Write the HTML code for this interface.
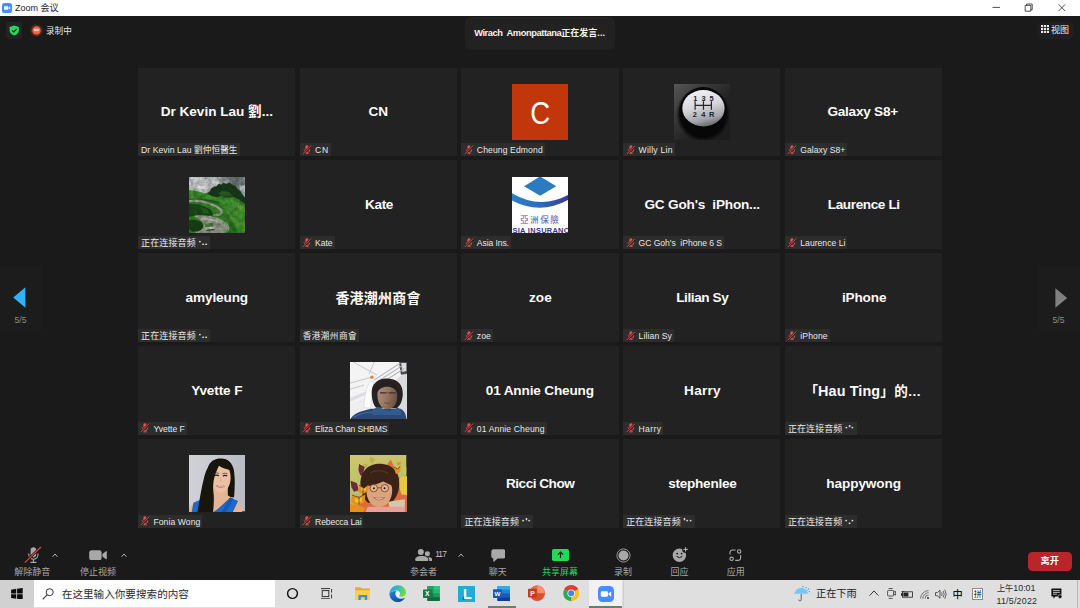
<!DOCTYPE html><html lang="zh"><head><meta charset="utf-8"><title>Zoom 会议</title><style>
*{box-sizing:border-box}
html,body{margin:0;padding:0;background:#1a1a1a}
body{width:1080px;height:608px;overflow:hidden;position:relative;background:#1a1a1a;font-family:"Liberation Sans","Noto Sans CJK SC",sans-serif;color:#fff}
.abs{position:absolute}
#titlebar{position:absolute;left:0;top:0;width:1080px;height:16px;background:#fff;color:#111}
#titlebar .t{position:absolute;left:15px;top:2.4px;font-size:9px;line-height:12px;white-space:nowrap;color:#1a1a1a}
.tile{position:absolute;width:157.3px;height:88.9px;background:#222222;overflow:hidden}
.nm{position:absolute;top:35.7px;transform:translateX(-50%);white-space:pre;font-weight:bold;font-size:13.6px;line-height:18px;color:#fafafa;font-family:"Liberation Sans","Noto Sans CJK TC","Noto Sans CJK SC",sans-serif}
.av{position:absolute;left:50.5px;top:16.3px;width:56.3px;height:56.3px;overflow:hidden}
.av svg{display:block;width:100%;height:100%}
.lb{position:absolute;left:0;bottom:0;height:13.4px;background:#2d2d2d;font-size:8.6px;line-height:13px;color:#e8e8e8;white-space:pre;font-family:"Liberation Sans","Noto Sans CJK TC","Noto Sans CJK SC",sans-serif}
.lb.cj{font-size:9px}
.lb span{position:absolute;top:1.0px}
.lb.cj span{top:0.3px}
.lb .mic{position:absolute;left:2.4px;top:1.8px;width:9.8px;height:9.6px}
.tbl{position:absolute;top:566.5px;font-size:9px;line-height:11px;color:#a6a6a6;white-space:nowrap;transform:translateX(-50%)}
#taskbar{position:absolute;left:0;top:579.5px;width:1080px;height:28.5px;background:#dfdfdf;color:#222}
</style></head><body>
<div id="titlebar">
<svg class="abs" style="left:2px;top:3px" width="10" height="10" viewBox="0 0 10 10"><rect width="10" height="10" rx="2.6" fill="#4a8cff"/><rect x="2" y="3.3" width="4.2" height="3.4" rx="0.8" fill="#fff"/><path d="M6.6 4.6L8.2 3.5v3L6.6 5.4z" fill="#fff"/></svg>
<span class="t">Zoom 会议</span>
<svg class="abs" style="left:988px;top:0" width="86" height="16" viewBox="0 0 86 16"><g stroke="#222" stroke-width="0.8" fill="none"><path d="M4.5 7.4h7.5"/><path d="M37.2 5.4h5.6v5.8h-5.6zM38.6 5.4V4h5.6v5.8h-1.4"/><path d="M70.6 4.4l6.6 6.6M77.2 4.4l-6.6 6.6"/></g></svg>
</div>
<div class="abs" style="left:6px;top:22px;width:16px;height:16.5px;border-radius:3px;background:#232323"></div>
<svg class="abs" style="left:9px;top:25px" width="11" height="12" viewBox="0 0 11 12"><g transform="translate(-0.16 0.4) scale(1.08 1.01)"><path d="M5 0.2L9.3 1.7V5C9.3 7.4 7.4 9 5 9.9C2.6 9 0.7 7.4 0.7 5V1.7Z" fill="#23d959"/><path d="M3 5l1.5 1.5L7.2 3.6" stroke="#1a1a1a" stroke-width="1.1" fill="none"/></g></svg>
<div class="abs" style="left:28.8px;top:22.9px;width:15px;height:15px;border-radius:7.5px;background:radial-gradient(circle,#ff5c4c 0,#ff5c4c 3.5px,rgba(200,70,30,.5) 4.5px,rgba(140,50,20,.18) 6px,rgba(120,40,20,0) 7.4px)"></div>
<div class="abs" style="left:33.9px;top:29.3px;width:4.8px;height:1.8px;background:#ffdcd6;border-radius:1px;box-shadow:0 0 1.2px #ffc8c0"></div>
<div class="abs" style="left:46px;top:24.5px;font-size:8.6px;line-height:12px;color:#e6e6e6;white-space:nowrap">录制中</div>

<div class="abs" style="left:465px;top:17px;width:150px;height:33px;border-radius:5px;background:#222222"></div>
<div class="abs" id="spk" style="left:474.2px;top:26.2px;font-size:9.3px;line-height:14px;font-weight:bold;color:#f2f2f2;white-space:nowrap"><span style="letter-spacing:-0.42px">Wirach&nbsp; Amonpattana</span><span style="font-size:9px;letter-spacing:0">正在发言</span><span style="letter-spacing:0.1px;font-size:9px">...</span></div>

<div class="abs" style="left:1036.5px;top:22px;width:37.5px;height:17px;border-radius:5px;background:#1f1f1f"></div>
<svg class="abs" style="left:1040.6px;top:25.3px" width="8.2" height="8.2" viewBox="0 0 9 9"><g fill="#e8e8e8"><rect x="0" y="0" width="2.4" height="2.4"/><rect x="3.3" y="0" width="2.4" height="2.4"/><rect x="6.6" y="0" width="2.4" height="2.4"/><rect x="0" y="3.3" width="2.4" height="2.4"/><rect x="3.3" y="3.3" width="2.4" height="2.4"/><rect x="6.6" y="3.3" width="2.4" height="2.4"/><rect x="0" y="6.6" width="2.4" height="2.4"/><rect x="3.3" y="6.6" width="2.4" height="2.4"/><rect x="6.6" y="6.6" width="2.4" height="2.4"/></g></svg>
<div class="abs" style="left:1051px;top:23.7px;font-size:9px;line-height:12px;color:#ececec;white-space:nowrap">视图</div>

<div class="abs" style="left:0;top:266px;width:42.3px;height:63px;background:#1c1c1c"></div>
<div class="abs" style="left:1037.7px;top:266px;width:42.3px;height:63px;background:#1c1c1c"></div>
<svg class="abs" style="left:13px;top:287px" width="13" height="21" viewBox="0 0 13 21"><path d="M0.2 10.5L12.4 0.3V20.7Z" fill="#2eb4f5"/></svg>
<svg class="abs" style="left:1054.5px;top:288px" width="13" height="20" viewBox="0 0 13 20"><path d="M12.2 10L0.4 0.3V19.7Z" fill="#808080"/></svg>
<div class="abs" style="left:14.5px;top:314.6px;font-size:8.6px;line-height:11px;color:#8a8a8a">5/5</div>
<div class="abs" style="left:1052.6px;top:314.6px;font-size:8.6px;line-height:11px;color:#8a8a8a">5/5</div>

<div class="tile" style="left:138.00px;top:67.50px">
<span class="nm" id="n00" style="left:78.82px;font-size:13.6px;letter-spacing:-0.012px;">Dr Kevin Lau 劉...</span>
<div class="lb" style="width:101.50px"><span id="l00" style="left:3.0px;letter-spacing:0.081px;">Dr Kevin Lau 劉仲恒醫生</span></div>
</div>
<div class="tile" style="left:299.73px;top:67.50px">
<span class="nm" id="n01" style="left:78.62px;font-size:13.6px;letter-spacing:0.030px;">CN</span>
<div class="lb" style="width:31.27px"><svg class="mic" viewBox="0 0 10 10" width="10" height="10"><rect x="3.4" y="0.3" width="3.4" height="5.6" rx="1.7" fill="#f0504e"/><path d="M2.2 4.4v0.5a2.9 2.9 0 0 0 5.8 0V4.4" fill="none" stroke="#f0504e" stroke-width="0.9"/><path d="M5.1 7.6v1.3M3.3 9.2h3.6" stroke="#f0504e" stroke-width="1"/><path d="M0.4 9.6L9.6 0.4" stroke="#222" stroke-width="2.2"/><path d="M0.4 9.6L9.6 0.4" stroke="#f0504e" stroke-width="1"/></svg><span id="l01" style="left:15.4px;letter-spacing:0.724px;">CN</span></div>
</div>
<div class="tile" style="left:461.46px;top:67.50px">
<div class="av"><svg viewBox="0 0 56 56" preserveAspectRatio="none"><rect width="56" height="56" fill="#c1360b"/><text x="0" y="0" transform="translate(28.1 39.6) scale(0.9 1)" font-size="30.5" text-anchor="middle" fill="#ffffff" font-family="Liberation Sans,sans-serif">C</text></svg></div>
<div class="lb" style="width:83.34px"><svg class="mic" viewBox="0 0 10 10" width="10" height="10"><rect x="3.4" y="0.3" width="3.4" height="5.6" rx="1.7" fill="#f0504e"/><path d="M2.2 4.4v0.5a2.9 2.9 0 0 0 5.8 0V4.4" fill="none" stroke="#f0504e" stroke-width="0.9"/><path d="M5.1 7.6v1.3M3.3 9.2h3.6" stroke="#f0504e" stroke-width="1"/><path d="M0.4 9.6L9.6 0.4" stroke="#222" stroke-width="2.2"/><path d="M0.4 9.6L9.6 0.4" stroke="#f0504e" stroke-width="1"/></svg><span id="l02" style="left:15.4px;letter-spacing:0.111px;">Cheung Edmond</span></div>
</div>
<div class="tile" style="left:623.19px;top:67.50px">
<div class="av"><svg viewBox="0 0 56 56" preserveAspectRatio="none"><defs><linearGradient id="gbg" x1="0" y1="0" x2="1" y2="1"><stop offset="0" stop-color="#565656"/><stop offset="0.3" stop-color="#3a3a3a"/><stop offset="0.6" stop-color="#222222"/><stop offset="1" stop-color="#1a1a1a"/></linearGradient><linearGradient id="gkn" x1="0.3" y1="0" x2="0.6" y2="1"><stop offset="0" stop-color="#f0f2f6"/><stop offset="0.45" stop-color="#d6d8dc"/><stop offset="0.8" stop-color="#a2a4a8"/><stop offset="1" stop-color="#66686c"/></linearGradient><radialGradient id="gsh" cx="0.5" cy="0.5" r="0.5"><stop offset="0.82" stop-color="#060606"/><stop offset="1" stop-color="#060606" stop-opacity="0"/></radialGradient></defs><rect width="56" height="56" fill="url(#gbg)"/><ellipse cx="29" cy="30" rx="27" ry="27.6" fill="url(#gsh)"/><ellipse cx="29" cy="27.6" rx="23.8" ry="24.6" fill="#070707"/><ellipse cx="29.3" cy="24.1" rx="21" ry="18.1" fill="url(#gkn)"/><g stroke="#26262a" stroke-width="1.2" fill="none"><path d="M21 17.2v8.4M29.3 17.2v8.4M37.2 17.2v8.4M21 21.2h16.2"/></g><g font-family="Liberation Sans,sans-serif" font-weight="bold" font-size="7.4" fill="#222226" text-anchor="middle"><text x="21.2" y="17">1</text><text x="29.3" y="17">3</text><text x="37.4" y="17">5</text><text x="20.6" y="32.4">2</text><text x="29.1" y="32.4">4</text><text x="37.4" y="32.4">R</text></g></svg></div>
<div class="lb" style="width:51.51px"><svg class="mic" viewBox="0 0 10 10" width="10" height="10"><rect x="3.4" y="0.3" width="3.4" height="5.6" rx="1.7" fill="#f0504e"/><path d="M2.2 4.4v0.5a2.9 2.9 0 0 0 5.8 0V4.4" fill="none" stroke="#f0504e" stroke-width="0.9"/><path d="M5.1 7.6v1.3M3.3 9.2h3.6" stroke="#f0504e" stroke-width="1"/><path d="M0.4 9.6L9.6 0.4" stroke="#222" stroke-width="2.2"/><path d="M0.4 9.6L9.6 0.4" stroke="#f0504e" stroke-width="1"/></svg><span id="l03" style="left:15.4px;letter-spacing:0.234px;">Willy Lin</span></div>
</div>
<div class="tile" style="left:784.92px;top:67.50px">
<span class="nm" id="n04" style="left:77.78px;font-size:13.6px;letter-spacing:-0.234px;">Galaxy S8+</span>
<div class="lb" style="width:62.48px"><svg class="mic" viewBox="0 0 10 10" width="10" height="10"><rect x="3.4" y="0.3" width="3.4" height="5.6" rx="1.7" fill="#f0504e"/><path d="M2.2 4.4v0.5a2.9 2.9 0 0 0 5.8 0V4.4" fill="none" stroke="#f0504e" stroke-width="0.9"/><path d="M5.1 7.6v1.3M3.3 9.2h3.6" stroke="#f0504e" stroke-width="1"/><path d="M0.4 9.6L9.6 0.4" stroke="#222" stroke-width="2.2"/><path d="M0.4 9.6L9.6 0.4" stroke="#f0504e" stroke-width="1"/></svg><span id="l04" style="left:15.4px;letter-spacing:0.041px;">Galaxy S8+</span></div>
</div>
<div class="tile" style="left:138.00px;top:160.38px">
<div class="av"><svg viewBox="0 0 56 56" preserveAspectRatio="none"><defs><linearGradient id="lsky" x1="0" y1="0" x2="1" y2="0"><stop offset="0" stop-color="#b2b2b6"/><stop offset="0.35" stop-color="#bcbcc0"/><stop offset="0.62" stop-color="#a4a4aa"/><stop offset="0.82" stop-color="#686a72"/><stop offset="1" stop-color="#8a8c94"/></linearGradient><filter id="ltx" x="0" y="0" width="1" height="1"><feTurbulence type="fractalNoise" baseFrequency="0.22" numOctaves="3" seed="7" result="n"/><feColorMatrix in="n" type="matrix" values="0 0 0 0 0  0 0 0 0 0  0 0 0 0 0  0 0 0 -1.6 1.05" result="a"/><feComposite in="SourceGraphic" in2="a" operator="in"/></filter></defs><rect width="56" height="56" fill="url(#lsky)"/><path d="M0 3q6-3 12 0t12-1t10 2v5H0z" fill="#96969c" opacity="0.75"/><path d="M0 9q8-2 14 1t10 1v6H0z" fill="#c6c6ca" opacity="0.7"/><path d="M50 8q3 1 6 0v12l-5-6z" fill="#b4b6be"/><path d="M0 13L8 14L16 16.4L20 15L23 10.4L25.4 8.4L27 9.6L29.4 6.6L32 7.6L34 5.8L37.4 7L40 5.4L43 7.8L46 8.6L48.4 12L51.4 14.6L54 19L56 21V56H0Z" fill="#3f8f2c"/><path d="M18 16.4L20.6 14.6L23 10.4L25.4 8.4L27 9.6L29.4 6.6L32 7.6L34 5.8L37.4 7L40 5.4L43 7.8L46 8.6L48.4 12L51.4 14.6L54 19L56 21V27L50 22.4L44 19.6L38 20.4L32 19L26 20.6Z" fill="#1c3a1d"/><path d="M28 16L34 14L40 15L44 19L38 20L32 18.6Z" fill="#2f6f28" opacity="0.8"/><path d="M0 14.6L10 15.6L18 17.6L30 21L40 21L48 23.6L56 29V44L48 36L38 28L26 24L12 22L0 22.6Z" fill="#48a232"/><path d="M34 28L44 31L52 38L56 44V56H44L46 50L42 42L38 36Z" fill="#55a838" opacity="0.9"/><path d="M40 22L50 26L56 31V36L48 30Z" fill="#7ab648" opacity="0.7"/><path d="M0 26.6L8 27L16 29.4L22 33L24.6 37.6L18 39L8 38L0 39.6Z" fill="#1e4d1b"/><path d="M12 30L18 32L20 36L14 36Z" fill="#2f7a26" opacity="0.8"/><path d="M0 43L6 42.6L12 44.4L14.6 48.6L12 53L4 54.4L0 52Z" fill="#1a4218"/><path d="M38 42L44 46L50 56H38L40.6 50Z" fill="#2f7c25"/><path d="M0 22.6L12 22L24 24L30 26" fill="none" stroke="#2b6d24" stroke-width="1.6"/><path d="M1 24Q10 22.8 18 25.6T30.6 31.4Q34.4 35 31 37.4L25 38.2" fill="none" stroke="#b6b6a8" stroke-width="2.3" stroke-linecap="round"/><path d="M5.6 39C16 37.6 29 40.4 36 46C40.4 49.6 39 54 34 56H5.4C8 54.6 14 53 14.6 48.6C14 44 9 41 5.6 39Z" fill="#aeaea0"/><path d="M12 41.4C20 41 30 44 35.4 48.6" fill="none" stroke="#c9c9c0" stroke-width="2.4"/><path d="M6 39C16 37.4 29.6 40 36.6 45.8C40 48.6 40.4 52 38.4 54.6" fill="none" stroke="#dcdcd6" stroke-width="0.7"/><path d="M15.6 46.4L23.4 45.8L24.4 49.4L16 50.2Z" fill="#5c8c48"/><path d="M16 50L24.6 49.2L25 51.8L17 52.8Z" fill="#e4e4de"/><path d="M17 52.6L25 51.6V52.6L17.4 53.6Z" fill="#3a3a36"/><path d="M0 14L16 17L24 10L40 6L56 21V56H0Z" fill="#0c260c" opacity="0.16"/><ellipse cx="14" cy="5" rx="16" ry="7" fill="#ececf0" opacity="0.55"/><rect width="56" height="56" fill="#0d2a10" opacity="0.5" filter="url(#ltx)"/></svg></div>
<div class="lb cj" style="width:72.00px"><span id="l10" style="left:3.0px;letter-spacing:0.125px;">正在连接音频 <b style="font-size:9.4px;letter-spacing:0.3px;color:#f4f4f4;position:relative;top:-0.9px">·..</b></span></div>
</div>
<div class="tile" style="left:299.73px;top:160.38px">
<span class="nm" id="n11" style="left:79.27px;font-size:13.6px;letter-spacing:-0.317px;">Kate</span>
<div class="lb" style="width:34.87px"><svg class="mic" viewBox="0 0 10 10" width="10" height="10"><rect x="3.4" y="0.3" width="3.4" height="5.6" rx="1.7" fill="#f0504e"/><path d="M2.2 4.4v0.5a2.9 2.9 0 0 0 5.8 0V4.4" fill="none" stroke="#f0504e" stroke-width="0.9"/><path d="M5.1 7.6v1.3M3.3 9.2h3.6" stroke="#f0504e" stroke-width="1"/><path d="M0.4 9.6L9.6 0.4" stroke="#222" stroke-width="2.2"/><path d="M0.4 9.6L9.6 0.4" stroke="#f0504e" stroke-width="1"/></svg><span id="l11" style="left:15.4px;letter-spacing:-0.054px;">Kate</span></div>
</div>
<div class="tile" style="left:461.46px;top:160.38px">
<div class="av"><svg viewBox="0 0 56 56" preserveAspectRatio="none"><defs><linearGradient id="aarc" x1="0" y1="0" x2="1" y2="0"><stop offset="0" stop-color="#2a80c8"/><stop offset="0.5" stop-color="#2d6cb8"/><stop offset="1" stop-color="#3a3a98"/></linearGradient></defs><rect width="56" height="56" fill="#ffffff"/><path d="M12 9.1L28 -0.6L44 9.1L28 18.6Z" fill="#2a7bc0"/><path d="M0 16.2Q28 32.8 56 17.8V22.8Q28 38 0 23.4Z" fill="url(#aarc)"/><text x="28" y="45.6" font-size="8.6" text-anchor="middle" fill="#5050a4" letter-spacing="1.4" font-family="Noto Sans CJK TC,Noto Sans CJK SC,sans-serif">亞洲保險</text><text x="28.6" y="55.7" font-size="7.4" font-weight="bold" text-anchor="middle" fill="#34348a" letter-spacing="0.3" font-family="Liberation Sans,sans-serif">ASIA INSURANCE</text></svg></div>
<div class="lb" style="width:49.44px"><svg class="mic" viewBox="0 0 10 10" width="10" height="10"><rect x="3.4" y="0.3" width="3.4" height="5.6" rx="1.7" fill="#f0504e"/><path d="M2.2 4.4v0.5a2.9 2.9 0 0 0 5.8 0V4.4" fill="none" stroke="#f0504e" stroke-width="0.9"/><path d="M5.1 7.6v1.3M3.3 9.2h3.6" stroke="#f0504e" stroke-width="1"/><path d="M0.4 9.6L9.6 0.4" stroke="#222" stroke-width="2.2"/><path d="M0.4 9.6L9.6 0.4" stroke="#f0504e" stroke-width="1"/></svg><span id="l12" style="left:15.4px;letter-spacing:-0.103px;">Asia Ins.</span></div>
</div>
<div class="tile" style="left:623.19px;top:160.38px">
<span class="nm" id="n13" style="left:79.01px;font-size:13.6px;letter-spacing:-0.188px;">GC Goh's  iPhon...</span>
<div class="lb" style="width:100.81px"><svg class="mic" viewBox="0 0 10 10" width="10" height="10"><rect x="3.4" y="0.3" width="3.4" height="5.6" rx="1.7" fill="#f0504e"/><path d="M2.2 4.4v0.5a2.9 2.9 0 0 0 5.8 0V4.4" fill="none" stroke="#f0504e" stroke-width="0.9"/><path d="M5.1 7.6v1.3M3.3 9.2h3.6" stroke="#f0504e" stroke-width="1"/><path d="M0.4 9.6L9.6 0.4" stroke="#222" stroke-width="2.2"/><path d="M0.4 9.6L9.6 0.4" stroke="#f0504e" stroke-width="1"/></svg><span id="l13" style="left:15.4px;letter-spacing:-0.044px;">GC Goh's  iPhone 6 S</span></div>
</div>
<div class="tile" style="left:784.92px;top:160.38px">
<span class="nm" id="n14" style="left:78.83px;font-size:13.6px;letter-spacing:-0.401px;">Laurence Li</span>
<div class="lb" style="width:62.48px"><svg class="mic" viewBox="0 0 10 10" width="10" height="10"><rect x="3.4" y="0.3" width="3.4" height="5.6" rx="1.7" fill="#f0504e"/><path d="M2.2 4.4v0.5a2.9 2.9 0 0 0 5.8 0V4.4" fill="none" stroke="#f0504e" stroke-width="0.9"/><path d="M5.1 7.6v1.3M3.3 9.2h3.6" stroke="#f0504e" stroke-width="1"/><path d="M0.4 9.6L9.6 0.4" stroke="#222" stroke-width="2.2"/><path d="M0.4 9.6L9.6 0.4" stroke="#f0504e" stroke-width="1"/></svg><span id="l14" style="left:15.4px;letter-spacing:0.014px;">Laurence Li</span></div>
</div>
<div class="tile" style="left:138.00px;top:253.25px">
<span class="nm" id="n20" style="left:78.80px;font-size:13.6px;letter-spacing:-0.134px;">amyleung</span>
<div class="lb cj" style="width:72.00px"><span id="l20" style="left:3.0px;letter-spacing:0.125px;">正在连接音频 <b style="font-size:9.4px;letter-spacing:0.3px;color:#f4f4f4;position:relative;top:-0.9px">·..</b></span></div>
</div>
<div class="tile" style="left:299.73px;top:253.25px">
<span class="nm" id="n21" style="left:78.27px;font-size:14px;letter-spacing:0.200px;">香港潮州商會</span>
<div class="lb" style="width:59.27px"><span id="l21" style="left:3.0px;letter-spacing:0.449px;">香港潮州商會</span></div>
</div>
<div class="tile" style="left:461.46px;top:253.25px">
<span class="nm" id="n22" style="left:79.04px;font-size:13.6px;letter-spacing:0.176px;">zoe</span>
<div class="lb" style="width:31.54px"><svg class="mic" viewBox="0 0 10 10" width="10" height="10"><rect x="3.4" y="0.3" width="3.4" height="5.6" rx="1.7" fill="#f0504e"/><path d="M2.2 4.4v0.5a2.9 2.9 0 0 0 5.8 0V4.4" fill="none" stroke="#f0504e" stroke-width="0.9"/><path d="M5.1 7.6v1.3M3.3 9.2h3.6" stroke="#f0504e" stroke-width="1"/><path d="M0.4 9.6L9.6 0.4" stroke="#222" stroke-width="2.2"/><path d="M0.4 9.6L9.6 0.4" stroke="#f0504e" stroke-width="1"/></svg><span id="l22" style="left:15.4px;letter-spacing:0.094px;">zoe</span></div>
</div>
<div class="tile" style="left:623.19px;top:253.25px">
<span class="nm" id="n23" style="left:79.11px;font-size:13.6px;letter-spacing:-0.412px;">Lilian Sy</span>
<div class="lb" style="width:50.81px"><svg class="mic" viewBox="0 0 10 10" width="10" height="10"><rect x="3.4" y="0.3" width="3.4" height="5.6" rx="1.7" fill="#f0504e"/><path d="M2.2 4.4v0.5a2.9 2.9 0 0 0 5.8 0V4.4" fill="none" stroke="#f0504e" stroke-width="0.9"/><path d="M5.1 7.6v1.3M3.3 9.2h3.6" stroke="#f0504e" stroke-width="1"/><path d="M0.4 9.6L9.6 0.4" stroke="#222" stroke-width="2.2"/><path d="M0.4 9.6L9.6 0.4" stroke="#f0504e" stroke-width="1"/></svg><span id="l23" style="left:15.4px;letter-spacing:0.103px;">Lilian Sy</span></div>
</div>
<div class="tile" style="left:784.92px;top:253.25px">
<span class="nm" id="n24" style="left:79.23px;font-size:13.6px;letter-spacing:-0.171px;">iPhone</span>
<div class="lb" style="width:44.78px"><svg class="mic" viewBox="0 0 10 10" width="10" height="10"><rect x="3.4" y="0.3" width="3.4" height="5.6" rx="1.7" fill="#f0504e"/><path d="M2.2 4.4v0.5a2.9 2.9 0 0 0 5.8 0V4.4" fill="none" stroke="#f0504e" stroke-width="0.9"/><path d="M5.1 7.6v1.3M3.3 9.2h3.6" stroke="#f0504e" stroke-width="1"/><path d="M0.4 9.6L9.6 0.4" stroke="#222" stroke-width="2.2"/><path d="M0.4 9.6L9.6 0.4" stroke="#f0504e" stroke-width="1"/></svg><span id="l24" style="left:15.4px;letter-spacing:0.102px;">iPhone</span></div>
</div>
<div class="tile" style="left:138.00px;top:346.12px">
<span class="nm" id="n30" style="left:78.80px;font-size:13.6px;letter-spacing:-0.118px;">Yvette F</span>
<div class="lb" style="width:48.80px"><svg class="mic" viewBox="0 0 10 10" width="10" height="10"><rect x="3.4" y="0.3" width="3.4" height="5.6" rx="1.7" fill="#f0504e"/><path d="M2.2 4.4v0.5a2.9 2.9 0 0 0 5.8 0V4.4" fill="none" stroke="#f0504e" stroke-width="0.9"/><path d="M5.1 7.6v1.3M3.3 9.2h3.6" stroke="#f0504e" stroke-width="1"/><path d="M0.4 9.6L9.6 0.4" stroke="#222" stroke-width="2.2"/><path d="M0.4 9.6L9.6 0.4" stroke="#f0504e" stroke-width="1"/></svg><span id="l30" style="left:15.4px;letter-spacing:-0.016px;">Yvette F</span></div>
</div>
<div class="tile" style="left:299.73px;top:346.12px">
<div class="av"><svg viewBox="0 0 56 56" preserveAspectRatio="none"><defs><filter id="ebl" x="-0.1" y="-0.1" width="1.2" height="1.2"><feGaussianBlur stdDeviation="0.5"/></filter><linearGradient id="efc" x1="0" y1="0" x2="1" y2="0.3"><stop offset="0" stop-color="#b08e7a"/><stop offset="0.55" stop-color="#987664"/><stop offset="1" stop-color="#6e5446"/></linearGradient></defs><rect width="56" height="56" fill="#f4f4f4"/><g filter="url(#ebl)"><path d="M28 31L57 9V57H28Z" fill="#d9dbdd"/><path d="M-1 42L28 31L28 57H-1Z" fill="#eeeeef"/><path d="M-1 36L24 26L24 29L-1 40Z" fill="#dedee2"/><path d="M48.6 -1H57V11.6L50.6 12.6Z" fill="#4c4c52"/><path d="M51 1H56V9L52 10Z" fill="#dcdce0"/><g stroke="#c2c2c8" stroke-width="0.9" fill="none"><path d="M3 0L27 13M24 0L19 12M0 21L22 15M0 27L14 23"/></g><g stroke="#b4b4ba" stroke-width="1.1" fill="none"><path d="M24 18L50 1M26 20.4L52 3.6M28 23L54 6.4"/></g><path d="M13.6 45C14.6 33 16.6 25 20 19L23.6 20C22 29 21 38 20.4 46.4Z" fill="#fcfcfc" stroke="#d4d4d8" stroke-width="0.6"/><circle cx="21.8" cy="15.2" r="1.7" fill="#d8864a"/><path d="M0 58C2 52 10 49 21 46.6L50 46.4C54.4 48 55.6 52 56.4 58Z" fill="#2b4a78"/><path d="M21.6 31C21 21.6 28 16 37.4 16.4C47.6 16.8 52.8 23 52.5 32C52.3 38 50.4 43 46.4 46L26 45.6C23 42.4 21.9 37 21.6 31Z" fill="#272020"/><path d="M27.3 33.4C27 26.4 31 22.8 37.2 23C43.8 23.2 47.2 27.2 47 34.2C46.8 41.4 43.2 47 37.2 47C31.2 47 27.6 41.4 27.3 33.4Z" fill="url(#efc)"/><path d="M26.4 31C26.8 24.4 31 21 36.4 21C42.4 21 46.8 24.4 47.8 31C45.4 27 41.6 24.8 37.6 24.6C32.6 24.4 28.6 26.8 26.4 31Z" fill="#272020"/><path d="M29.8 30.8h6.4M39.2 30.8h6.2" stroke="#3a2e2a" stroke-width="1.2"/><path d="M36.2 30.6h3" stroke="#4a3a34" stroke-width="0.6"/><path d="M33.8 40.4q3.4 1.4 6.8 0" stroke="#684840" stroke-width="1" fill="none"/><path d="M22.4 48C25 44.6 30 44.4 33 46.8C37 49.6 43 48.6 47.4 45.2C50.4 46.4 51.4 49.4 50.8 52.6L22 52.6Z" fill="#365a8e"/><path d="M4 55C10 51 16 50 22 50" stroke="#4a6a9c" stroke-width="1.2" fill="none"/></g></svg></div>
<div class="lb" style="width:89.57px"><svg class="mic" viewBox="0 0 10 10" width="10" height="10"><rect x="3.4" y="0.3" width="3.4" height="5.6" rx="1.7" fill="#f0504e"/><path d="M2.2 4.4v0.5a2.9 2.9 0 0 0 5.8 0V4.4" fill="none" stroke="#f0504e" stroke-width="0.9"/><path d="M5.1 7.6v1.3M3.3 9.2h3.6" stroke="#f0504e" stroke-width="1"/><path d="M0.4 9.6L9.6 0.4" stroke="#222" stroke-width="2.2"/><path d="M0.4 9.6L9.6 0.4" stroke="#f0504e" stroke-width="1"/></svg><span id="l31" style="left:15.4px;letter-spacing:-0.147px;">Eliza Chan SHBMS</span></div>
</div>
<div class="tile" style="left:461.46px;top:346.12px">
<span class="nm" id="n32" style="left:78.39px;font-size:13.6px;letter-spacing:-0.162px;">01 Annie Cheung</span>
<div class="lb" style="width:85.14px"><svg class="mic" viewBox="0 0 10 10" width="10" height="10"><rect x="3.4" y="0.3" width="3.4" height="5.6" rx="1.7" fill="#f0504e"/><path d="M2.2 4.4v0.5a2.9 2.9 0 0 0 5.8 0V4.4" fill="none" stroke="#f0504e" stroke-width="0.9"/><path d="M5.1 7.6v1.3M3.3 9.2h3.6" stroke="#f0504e" stroke-width="1"/><path d="M0.4 9.6L9.6 0.4" stroke="#222" stroke-width="2.2"/><path d="M0.4 9.6L9.6 0.4" stroke="#f0504e" stroke-width="1"/></svg><span id="l32" style="left:15.4px;letter-spacing:0.119px;">01 Annie Cheung</span></div>
</div>
<div class="tile" style="left:623.19px;top:346.12px">
<span class="nm" id="n33" style="left:79.26px;font-size:13.6px;letter-spacing:0.234px;">Harry</span>
<div class="lb" style="width:40.11px"><svg class="mic" viewBox="0 0 10 10" width="10" height="10"><rect x="3.4" y="0.3" width="3.4" height="5.6" rx="1.7" fill="#f0504e"/><path d="M2.2 4.4v0.5a2.9 2.9 0 0 0 5.8 0V4.4" fill="none" stroke="#f0504e" stroke-width="0.9"/><path d="M5.1 7.6v1.3M3.3 9.2h3.6" stroke="#f0504e" stroke-width="1"/><path d="M0.4 9.6L9.6 0.4" stroke="#222" stroke-width="2.2"/><path d="M0.4 9.6L9.6 0.4" stroke="#f0504e" stroke-width="1"/></svg><span id="l33" style="left:15.4px;letter-spacing:0.339px;">Harry</span></div>
</div>
<div class="tile" style="left:784.92px;top:346.12px">
<span class="nm" id="n34" style="left:77.78px;font-size:13.6px;">「<span style="letter-spacing:0.1px;font-size:14.4px">Hau Ting</span>」<span style="margin-left:0.6px;letter-spacing:0.4px">的...</span></span>
<div class="lb cj" style="width:71.78px"><span id="l34" style="left:3.0px;letter-spacing:0.089px;">正在连接音频 <b style="font-size:9.4px;letter-spacing:0.3px;color:#f4f4f4;position:relative;top:-0.9px">·'·</b></span></div>
</div>
<div class="tile" style="left:138.00px;top:439.00px">
<div class="av"><svg viewBox="0 0 56 56" preserveAspectRatio="none"><defs><linearGradient id="fbg" x1="0" y1="0" x2="1" y2="0"><stop offset="0" stop-color="#d0d2d8"/><stop offset="0.5" stop-color="#c6c8ce"/><stop offset="1" stop-color="#b9bbc2"/></linearGradient><filter id="fbl" x="-0.1" y="-0.1" width="1.2" height="1.2"><feGaussianBlur stdDeviation="0.55"/></filter></defs><rect width="56" height="56" fill="url(#fbg)"/><g filter="url(#fbl)"><path d="M19 12C21 6 26 3.4 32 3.5C39 3.6 43 8 44.6 15C45.8 22 45.8 32 44.8 42L37 42L36 12Z" fill="#17120f"/><path d="M-1 58C0 50 4 47.6 9 46.4L22 43L23.6 40V30H38.6V40L44 43.6C49.4 45 52.4 48 53 58Z" fill="#e6b595"/><path d="M2.4 58L4.4 47.4L10.6 44.8L15 58Z" fill="#1a68cc"/><path d="M22 58L28.4 54L41 42.4L48.8 45.8L43 58Z" fill="#1a68cc"/><path d="M41 42.4L44 43.6L36 58H32Z" fill="#1458b4"/><path d="M21.4 22C21.4 13.6 26.4 9.2 32.2 9.4C38.6 9.6 41.6 15 41.4 23C41.2 31 37.2 37.4 31.6 37.4C26 37.4 21.4 30.4 21.4 22Z" fill="#ecc0a2"/><path d="M8.2 58C10.4 46 12.4 32 15.4 21C18 10.4 24 4.4 31 4.4C37 4.6 41 8 43.4 15C38.4 14.6 33.4 13 29.8 10.6C27.6 15 25.4 20.4 24.4 26C23.8 31 24 36 24.6 40C25 46 24.4 52 23.8 58Z" fill="#17120f"/><path d="M27.4 30.4q3.8 2.8 7.8 0.4" stroke="#b4585e" stroke-width="1.5" fill="none"/><path d="M28 31q3.4 1.6 6.8 0.2" stroke="#f4e4de" stroke-width="0.6" fill="none"/><path d="M25.4 20.4q2.2-1 4.4 0.2M33.6 20.8q2.2-1.2 4.4 0" stroke="#2a1c1a" stroke-width="1.2" fill="none"/><path d="M25 18.4q2.4-1.2 5 0M33.2 18.6q2.6-1.2 5.2 0.2" stroke="#4a3630" stroke-width="0.7" fill="none"/><path d="M31.6 22v5" stroke="#d8a488" stroke-width="0.8"/></g></svg></div>
<div class="lb" style="width:64.40px"><svg class="mic" viewBox="0 0 10 10" width="10" height="10"><rect x="3.4" y="0.3" width="3.4" height="5.6" rx="1.7" fill="#f0504e"/><path d="M2.2 4.4v0.5a2.9 2.9 0 0 0 5.8 0V4.4" fill="none" stroke="#f0504e" stroke-width="0.9"/><path d="M5.1 7.6v1.3M3.3 9.2h3.6" stroke="#f0504e" stroke-width="1"/><path d="M0.4 9.6L9.6 0.4" stroke="#222" stroke-width="2.2"/><path d="M0.4 9.6L9.6 0.4" stroke="#f0504e" stroke-width="1"/></svg><span id="l40" style="left:15.4px;letter-spacing:0.081px;">Fonia Wong</span></div>
</div>
<div class="tile" style="left:299.73px;top:439.00px">
<div class="av"><svg viewBox="0 0 56 56" preserveAspectRatio="none"><defs><linearGradient id="rbg" x1="0" y1="0" x2="0.3" y2="1"><stop offset="0" stop-color="#cfc76c"/><stop offset="0.6" stop-color="#bcbf6c"/><stop offset="1" stop-color="#a9b66a"/></linearGradient><filter id="rbl" x="-0.1" y="-0.1" width="1.2" height="1.2"><feGaussianBlur stdDeviation="0.5"/></filter></defs><rect width="56" height="56" fill="url(#rbg)"/><g filter="url(#rbl)"><path d="M40.5 4.5L58 42V58H4Z" fill="#dc6c3a"/><path d="M49 24C51 21 54 22 57 21V40L51.4 39.4Q48 31 49 24Z" fill="#e8c93c"/><path d="M52 10l4 2v8l-3-2z" fill="#c8c860"/><path d="M20 1.6l5 2.6-3.4 4.4-2-3zM18 8.4l-6.4 1.6 4.4 3.4z" fill="#b4b548"/><path d="M9 9L14.6 12L13.4 17L15.4 22.4L10 20L8.4 15Z" fill="#6a2a3c"/><path d="M0.6 25.6L7 28L8.6 35L4 36.6L1.4 32Z" fill="#6a2a3c"/><path d="M10.5 30C9.6 18 17 8.7 29 8.7C42 8.7 49.6 17 49 29C48.7 37 46 43 41 47.4L18 47.4C13 43 11 37 10.5 30Z" fill="#3a2217"/><path d="M16.2 35C16 28 21 24 29 24C37.6 24 42.2 28 42 35C41.8 44.4 36.6 51.8 29 51.8C21.4 51.8 16.4 44.4 16.2 35Z" fill="#dba47c"/><path d="M13.6 32C13.6 21 20 14 29 14C39 14 45.4 21 46 32C42 30.4 37 28.6 33 26.4C28 29 21 30.6 13.6 32Z" fill="#3a2217"/><path d="M20 18q8-5 18 0" stroke="#5a3826" stroke-width="1.6" fill="none" opacity="0.7"/><circle cx="23.6" cy="33" r="3.7" fill="#e4b48e" stroke="#6c4028" stroke-width="0.8"/><circle cx="34.6" cy="33" r="3.7" fill="#e4b48e" stroke="#6c4028" stroke-width="0.8"/><path d="M27.3 32.6h3.6" stroke="#6c4028" stroke-width="0.7"/><circle cx="23.8" cy="33" r="1" fill="#2a1a14"/><circle cx="34.4" cy="33" r="1" fill="#2a1a14"/><path d="M23.4 42.4q5.6 4.8 11.2 0q-5.6 1.4-11.2 0z" fill="#faf0ea" stroke="#a45444" stroke-width="0.7"/><path d="M37.8 46.4L54.6 44V54H40Z" fill="#d6c6ae"/><path d="M17.5 51.6H54.6V58H15Z" fill="#e8a098"/><g fill="#e8901f"><path d="M9 30l5 3 4.4-3.6 0 6-5.4 3.6-5-3zM2 40l7 2 6.4-3-1 8-7.4 3-6-3zM0 49l9 1 6.4 3-3 4H0zM43.6 12l4 2 2.4-3 0 6-4.4 2zM46.5 6.5l2.6 1.2 1.5-1.8-0.2 3.6-2.8 0.8z"/></g><g fill="#f4c040"><path d="M11 32l2.4 1.4 2.6-1.6v2.6l-2.6 1.8-2.4-1.4zM5 43l3.4 1 3.6-1.6-0.6 3.8-3.4 1.4-3-1.4z"/></g><g stroke="#4a2410" stroke-width="0.6" fill="none"><path d="M9 30l5 3 4.4-3.6M2 40l7 2 6.4-3M43.6 12l4 2 2.4-3M13 39v-6M9 50v-8"/></g></g></svg></div>
<div class="lb" style="width:63.77px"><svg class="mic" viewBox="0 0 10 10" width="10" height="10"><rect x="3.4" y="0.3" width="3.4" height="5.6" rx="1.7" fill="#f0504e"/><path d="M2.2 4.4v0.5a2.9 2.9 0 0 0 5.8 0V4.4" fill="none" stroke="#f0504e" stroke-width="0.9"/><path d="M5.1 7.6v1.3M3.3 9.2h3.6" stroke="#f0504e" stroke-width="1"/><path d="M0.4 9.6L9.6 0.4" stroke="#222" stroke-width="2.2"/><path d="M0.4 9.6L9.6 0.4" stroke="#f0504e" stroke-width="1"/></svg><span id="l41" style="left:15.4px;letter-spacing:-0.128px;">Rebecca Lai</span></div>
</div>
<div class="tile" style="left:461.46px;top:439.00px">
<span class="nm" id="n42" style="left:78.69px;font-size:13.6px;letter-spacing:-0.497px;">Ricci Chow</span>
<div class="lb cj" style="width:71.94px"><span id="l42" style="left:3.0px;letter-spacing:0.105px;">正在连接音频 <b style="font-size:9.4px;letter-spacing:0.3px;color:#f4f4f4;position:relative;top:-0.9px">·'·</b></span></div>
</div>
<div class="tile" style="left:623.19px;top:439.00px">
<span class="nm" id="n43" style="left:79.16px;font-size:13.6px;letter-spacing:-0.272px;">stephenlee</span>
<div class="lb cj" style="width:71.81px"><span id="l43" style="left:3.0px;letter-spacing:0.092px;">正在连接音频 <b style="font-size:9.4px;letter-spacing:0.3px;color:#f4f4f4;position:relative;top:-0.9px">'··</b></span></div>
</div>
<div class="tile" style="left:784.92px;top:439.00px">
<span class="nm" id="n44" style="left:78.73px;font-size:13.6px;letter-spacing:-0.092px;">happywong</span>
<div class="lb cj" style="width:71.78px"><span id="l44" style="left:3.0px;letter-spacing:0.051px;">正在连接音频 <b style="font-size:9.4px;letter-spacing:0.3px;color:#f4f4f4;position:relative;top:-0.9px">·.·</b></span></div>
</div>
<!-- toolbar -->
<svg class="abs" style="left:22px;top:545px" width="22" height="20" viewBox="0 0 22 20"><g fill="none" stroke="#a8a8a8" stroke-width="1.1"><path d="M6.8 8.6v1a4.6 4.6 0 0 0 9.2 0v-1"/><path d="M11.4 14.4v2.6M8.4 17.4h6"/></g><rect x="8.6" y="2.2" width="5.6" height="10" rx="2.8" fill="#a8a8a8"/><path d="M2.8 17.6L19 2" stroke="#1a1a1a" stroke-width="2.6"/><path d="M2.8 17.6L19 2" stroke="#e8443c" stroke-width="1.1"/></svg>
<svg class="abs" style="left:51.6px;top:553px" width="6" height="4.4" viewBox="0 0 6 4.4"><path d="M0.6 3.8L3 1L5.4 3.8" fill="none" stroke="#b0b0b0" stroke-width="1"/></svg>
<div class="tbl" style="left:32.3px">解除静音</div>

<svg class="abs" style="left:88.8px;top:549.5px" width="18" height="10.4" viewBox="0 0 18 10.4"><rect x="0.2" y="0.2" width="12.4" height="10" rx="2.4" fill="#a8a8a8"/><path d="M13.4 4L17 1.2c0.4-0.3 0.8 0 0.8 0.4v7.2c0 0.4-0.4 0.7-0.8 0.4L13.4 6.4z" fill="#a8a8a8"/></svg>
<svg class="abs" style="left:120.8px;top:553px" width="6" height="4.4" viewBox="0 0 6 4.4"><path d="M0.6 3.8L3 1L5.4 3.8" fill="none" stroke="#b0b0b0" stroke-width="1"/></svg>
<div class="tbl" style="left:98px">停止视频</div>

<svg class="abs" style="left:414.8px;top:548.6px" width="17.6" height="12.8" viewBox="0 0 17.6 12.8"><g fill="#a8a8a8"><circle cx="5.8" cy="3.1" r="3"/><path d="M0.2 10.6C0.2 8.2 2.6 7 6.6 7S13.4 8.2 13.4 10.6C13.4 12 12.4 12.7 11 12.7H2.6C1.2 12.7 0.2 12 0.2 10.6Z"/><circle cx="12.4" cy="4.7" r="2.5"/><path d="M13.2 8.2C16 8.2 17.5 9.4 17.5 10.9C17.5 12 16.8 12.7 15.6 12.7H13.6C14.6 11.6 14.6 9.4 13.2 8.2Z"/></g></svg>
<div class="abs" style="left:435.2px;top:548.9px;font-size:8.4px;line-height:11px;color:#c4c4c4;letter-spacing:-0.85px">117</div>
<svg class="abs" style="left:457.6px;top:553px" width="6" height="4.4" viewBox="0 0 6 4.4"><path d="M0.6 3.8L3 1L5.4 3.8" fill="none" stroke="#b0b0b0" stroke-width="1"/></svg>
<div class="tbl" style="left:423.4px">参会者</div>

<svg class="abs" style="left:490.6px;top:548.6px" width="14.8" height="13" viewBox="0 0 14.8 13"><path d="M2.6 0.3H12.2A2.3 2.3 0 0 1 14.5 2.6V7.2A2.3 2.3 0 0 1 12.2 9.5H6.6L3 12.7C2.7 13 2.3 12.8 2.3 12.4V9.5A2.3 2.3 0 0 1 0.3 7.2V2.6A2.3 2.3 0 0 1 2.6 0.3Z" fill="#a8a8a8"/></svg>
<div class="tbl" style="left:497.8px">聊天</div>

<div class="abs" style="left:551.7px;top:548.9px;width:17.2px;height:12.4px;border-radius:1.8px;background:#23d959"></div>
<svg class="abs" style="left:556.8px;top:551.4px" width="7" height="7.4" viewBox="0 0 7 7.4"><path d="M3.5 7V1.2M0.9 3.6L3.5 1L6.1 3.6" fill="none" stroke="#1a1a1a" stroke-width="1.2"/></svg>
<div class="tbl" style="left:560.1px;color:#23d959">共享屏幕</div>

<svg class="abs" style="left:615.6px;top:547.5px" width="15" height="15" viewBox="0 0 15 15"><circle cx="7.5" cy="7.5" r="6.6" fill="none" stroke="#b4b4b4" stroke-width="0.8"/><circle cx="7.5" cy="7.5" r="5" fill="#a8a8a8"/></svg>
<div class="tbl" style="left:623.1px">录制</div>

<svg class="abs" style="left:672px;top:546px" width="17" height="17" viewBox="0 0 17 17"><circle cx="7.4" cy="9.2" r="6.7" fill="#a8a8a8"/><circle cx="13.6" cy="3.4" r="3.4" fill="#1a1a1a"/><path d="M13.6 1.2v4.4M11.4 3.4h4.4" stroke="#c8c8c8" stroke-width="0.9"/><circle cx="5.2" cy="7.6" r="0.9" fill="#1a1a1a"/><circle cx="9.6" cy="7.6" r="0.9" fill="#1a1a1a"/><path d="M4.6 10.4q2.8 2.6 5.6 0" fill="none" stroke="#1a1a1a" stroke-width="1"/></svg>
<div class="tbl" style="left:679.5px">回应</div>

<svg class="abs" style="left:729.4px;top:549.4px" width="13" height="12.4" viewBox="0 0 13 12.4"><g fill="none" stroke="#a8a8a8" stroke-width="1.1"><path d="M6.6 1H3.4A2.4 2.4 0 0 0 1 3.4V5.4"/><path d="M11.6 6V9A2.4 2.4 0 0 1 9.2 11.4H6.2"/><circle cx="10.2" cy="2.4" r="1.7"/><circle cx="2.6" cy="9.8" r="1.7"/></g></svg>
<div class="tbl" style="left:735.8px">应用</div>

<div class="abs" style="left:1028.2px;top:551.8px;width:43.4px;height:19.2px;border-radius:4.5px;background:#b92528"></div>
<div class="abs" style="left:1049.7px;top:554.7px;transform:translateX(-50%);font-size:9.2px;line-height:12px;font-weight:bold;color:#fff;white-space:nowrap">离开</div>

<!-- taskbar -->
<div id="taskbar">
<div class="abs" style="left:0;top:0;width:34.4px;height:28.5px;background:#d1d1d1"></div>
<div class="abs" style="left:34.4px;top:0.4px;width:240.6px;height:27.2px;background:#fff"></div>
<svg class="abs" style="left:11px;top:8.4px" width="11.8" height="11.6" viewBox="0 0 12 12"><g fill="#0c0c0c"><path d="M0 1.7L5.3 0.9V5.6H0Z"/><path d="M6.2 0.8L12 0V5.6H6.2Z"/><path d="M0 6.4H5.3V11.1L0 10.3Z"/><path d="M6.2 6.4H12V12L6.2 11.2Z"/></g></svg>
<svg class="abs" style="left:41.6px;top:8.6px" width="12.2" height="12" viewBox="0 0 12 12"><circle cx="7.6" cy="4.2" r="3.5" fill="none" stroke="#333" stroke-width="1"/><path d="M5 6.8L0.6 11.4" stroke="#333" stroke-width="1.1"/></svg>
<div class="abs" style="left:61.8px;top:7.2px;font-size:10.6px;line-height:14px;color:#2a2a2a;white-space:nowrap">在这里输入你要搜索的内容</div>

<svg class="abs" style="left:286px;top:7.6px" width="13" height="13" viewBox="0 0 13 13"><circle cx="6.5" cy="6.5" r="4.9" fill="none" stroke="#111" stroke-width="1.4"/></svg>
<svg class="abs" style="left:319.6px;top:8.2px" width="13" height="11.4" viewBox="0 0 13 11.4"><g fill="none" stroke="#333" stroke-width="1"><rect x="2.2" y="2.6" width="6.6" height="6"/><path d="M1 0.6h9M1 10.8h9M11.6 1v3.6M11.6 6.6v3.8"/></g></svg>

<svg class="abs" style="left:354.6px;top:7px" width="15.6" height="13" viewBox="0 0 15.6 13"><path d="M0 1.2C0 0.6 0.4 0.2 1 0.2H5.4L6.8 1.6H14.6C15.2 1.6 15.6 2 15.6 2.6V12C15.6 12.5 15.2 12.9 14.6 12.9H1C0.4 12.9 0 12.5 0 12Z" fill="#e8a92c"/><path d="M0 3.2H15.6V12C15.6 12.5 15.2 12.9 14.6 12.9H1C0.4 12.9 0 12.5 0 12Z" fill="#fbd04e"/><path d="M3.4 12.9V8h8.8v4.9h-2.4V10.2H5.8v2.7Z" fill="#3a92dc"/></svg>

<svg class="abs" style="left:388.6px;top:5.6px" width="17.4" height="17.4" viewBox="0 0 18 18"><defs><linearGradient id="eg1" x1="0" y1="0.2" x2="1" y2="0.5"><stop offset="0" stop-color="#2b9be8"/><stop offset="0.5" stop-color="#34bcc0"/><stop offset="0.85" stop-color="#5fd65a"/><stop offset="1" stop-color="#6fdc50"/></linearGradient><linearGradient id="eg2" x1="0" y1="0" x2="0.8" y2="1"><stop offset="0" stop-color="#2388dc"/><stop offset="0.5" stop-color="#1766c0"/><stop offset="1" stop-color="#104a98"/></linearGradient></defs><path d="M0.5 9C0.5 14 4.4 17.7 9 17.7C12.4 17.7 15.2 16 16.6 13.2C14 14.6 11 14.6 8.8 13.2C6.4 11.6 5.8 8.6 7.4 6.2C4 6 1.2 7.2 0.5 9Z" fill="url(#eg2)"/><path d="M0.5 9.4C0.6 4.2 4.6 0.3 9.2 0.3C14 0.3 17.5 4 17.6 8C17.6 10.6 15.6 12.1 13.4 12.1C11.6 12.1 10.4 11.4 10.4 10.6C10.4 10 11.3 9.6 11.3 8.6C11.3 7 9.8 5.7 7.6 5.7C4.2 5.7 1.4 7.4 0.5 9.4Z" fill="url(#eg1)"/><path d="M7.4 9.8C7.2 8 8.6 6.9 10 7.3C11.3 7.7 11.6 8.9 11 9.8C10.4 10.6 10.4 11.5 11.2 12.2C9.2 12.3 7.6 11.4 7.4 9.8Z" fill="#f2f7fc"/></svg>

<svg class="abs" style="left:423.4px;top:6.4px" width="16.8" height="15" viewBox="0 0 17 15"><rect x="4.4" y="0" width="12.6" height="15" rx="0.8" fill="#1d9c5c"/><rect x="4.4" y="0" width="6.3" height="3.75" fill="#21a366"/><rect x="10.7" y="0" width="6.3" height="3.75" fill="#33c481"/><rect x="4.4" y="3.75" width="6.3" height="3.75" fill="#1a9458"/><rect x="10.7" y="3.75" width="6.3" height="3.75" fill="#2bb673"/><rect x="4.4" y="7.5" width="6.3" height="3.75" fill="#117a42"/><rect x="10.7" y="7.5" width="6.3" height="3.75" fill="#1c9a58"/><rect x="4.4" y="11.25" width="12.6" height="3.75" fill="#126a3a"/><rect x="0" y="3.4" width="8.8" height="8.6" rx="0.8" fill="#107c41"/><text x="4.4" y="10.1" font-size="6.8" font-weight="bold" text-anchor="middle" fill="#fff" font-family="Liberation Sans,sans-serif">X</text></svg>

<svg class="abs" style="left:458.2px;top:6.2px" width="17.2" height="16.6" viewBox="0 0 17.2 16.6"><rect width="17.2" height="16.6" fill="#21acd6"/><path d="M4.4 13.6L6.6 8V13.6Z" fill="#17307a"/><text x="9.4" y="13.5" font-size="14.4" font-weight="bold" text-anchor="middle" fill="#fff" font-family="Liberation Sans,sans-serif">L</text></svg>

<svg class="abs" style="left:493px;top:6.8px" width="17" height="15" viewBox="0 0 17 15"><rect x="4.4" y="0" width="12.6" height="15" rx="1" fill="#2b7cd3"/><rect x="4.4" y="0" width="12.6" height="3.75" fill="#41a5ee"/><rect x="4.4" y="3.75" width="12.6" height="3.75" fill="#2b7cd3"/><rect x="4.4" y="7.5" width="12.6" height="3.75" fill="#185abd"/><rect x="4.4" y="11.25" width="12.6" height="3.75" fill="#103f91"/><rect x="0" y="3.2" width="8.8" height="8.8" rx="0.8" fill="#185abd"/><text x="4.4" y="9.9" font-size="6.2" font-weight="bold" text-anchor="middle" fill="#fff" font-family="Liberation Sans,sans-serif">W</text></svg>
<div class="abs" style="left:488px;top:26.9px;width:28.4px;height:1.6px;background:#6d7d70"></div>

<svg class="abs" style="left:528px;top:5.8px" width="17" height="16.4" viewBox="0 0 17 16.4"><circle cx="9.2" cy="8.2" r="7.8" fill="#d35230"/><path d="M9.2 0.4A7.8 7.8 0 0 1 17 8.2H9.2Z" fill="#ff8f6b"/><path d="M9.2 0.4A7.8 7.8 0 0 0 4 2.4V8.2H9.2Z" fill="#ed6c47"/><rect x="0" y="3.8" width="8.8" height="8.8" rx="0.8" fill="#c43e1c"/><text x="4.5" y="10.6" font-size="6.8" font-weight="bold" text-anchor="middle" fill="#fff" font-family="Liberation Sans,sans-serif">P</text></svg>

<svg class="abs" style="left:563.2px;top:5.8px" width="16.4" height="16.4" viewBox="0 0 16 16"><circle cx="8" cy="8" r="7.8" fill="#e8e8e8"/><path d="M8 8L1.25 4.1A7.8 7.8 0 0 1 14.75 4.1Z" fill="#e33b2e"/><path d="M8 8L14.75 4.1A7.8 7.8 0 0 1 8 15.8Z" fill="#fbc116"/><path d="M8 8L8 15.8A7.8 7.8 0 0 1 1.25 4.1Z" fill="#2da94f"/><path d="M8 4.1H14.75A7.8 7.8 0 0 0 1.25 4.1Z" fill="#e33b2e"/><circle cx="8" cy="8" r="3.7" fill="#f4f4f4"/><circle cx="8" cy="8" r="2.9" fill="#4086f4"/></svg>

<div class="abs" style="left:589.2px;top:0.4px;width:32.6px;height:28.1px;background:#f1f1f1"></div>
<div class="abs" style="left:589.2px;top:26.9px;width:32.6px;height:1.6px;background:#64806e"></div>
<div class="abs" style="left:623.2px;top:1px;width:1px;height:27px;background:#cfcfcf"></div>
<svg class="abs" style="left:598.2px;top:6.4px" width="16" height="16" viewBox="0 0 16 16"><rect width="16" height="16" rx="4.4" fill="#4a8cff"/><rect x="2.8" y="5.2" width="7.2" height="5.6" rx="1.3" fill="#fff"/><path d="M10.6 7.2L13.2 5.4V10.6L10.6 8.8Z" fill="#fff"/></svg>

<svg class="abs" style="left:794px;top:6.4px" width="16.4" height="16" viewBox="0 0 16.4 16"><path d="M0.4 8.6C0.6 4.6 3.6 2 7.2 2C10.8 2 13.8 4.6 14 8.2C12.8 7.2 11.6 7.2 10.6 8.2C9.6 7.2 8.2 7.2 7.2 8.2C6.2 7.2 4.8 7.2 3.8 8.2C2.6 7.4 1.4 7.6 0.4 8.6Z" fill="#7cc4f2"/><path d="M7.2 8V13.6C7.2 15.4 4.8 15.4 4.8 13.6" stroke="#555" stroke-width="0.9" fill="none"/><g fill="#3f9ae0"><circle cx="9" cy="0.8" r="0.7"/><circle cx="12" cy="1.6" r="0.7"/><circle cx="14.6" cy="3" r="0.7"/><circle cx="15.4" cy="5.6" r="0.7"/><circle cx="13" cy="4" r="0.6"/></g></svg>
<div class="abs" style="left:816px;top:7.4px;font-size:10.2px;line-height:14px;color:#1c1c1c;white-space:nowrap">正在下雨</div>
<svg class="abs" style="left:868.6px;top:10.8px" width="10" height="6" viewBox="0 0 10 6"><path d="M0.6 5.6L5 0.9L9.4 5.6" fill="none" stroke="#222" stroke-width="0.9"/></svg>
<svg class="abs" style="left:886.6px;top:8.8px" width="9" height="11" viewBox="0 0 9 11"><g fill="none" stroke="#333" stroke-width="0.8"><rect x="0.6" y="2.4" width="6" height="5.6" rx="0.8"/><path d="M1.6 0.5h4M1.6 10.4h4M6.6 4.2L8.4 3.2V7.2L6.6 6.2"/></g></svg>
<svg class="abs" style="left:901px;top:11px" width="12.6" height="7" viewBox="0 0 12.6 7"><rect x="1.6" y="0.8" width="10" height="5.4" fill="none" stroke="#222" stroke-width="0.8"/><rect x="0" y="2.2" width="1.6" height="2.6" fill="#222"/><rect x="2.4" y="1.6" width="5" height="3.8" fill="#222"/><path d="M0.4 0.2L3.4 0.2" stroke="#222" stroke-width="1"/></svg>
<svg class="abs" style="left:919.6px;top:10.2px" width="10" height="9" viewBox="0 0 10 9"><g fill="none" stroke="#555" stroke-width="0.8"><path d="M0.6 8.6A8 8 0 0 1 8.6 0.6"/><path d="M2.8 8.6A5.8 5.8 0 0 1 8.6 2.8"/><path d="M5 8.6A3.6 3.6 0 0 1 8.6 5"/></g><circle cx="8" cy="8" r="1" fill="#333"/></svg>
<svg class="abs" style="left:935px;top:9.4px" width="12" height="10.4" viewBox="0 0 12 10.4"><path d="M0.5 3.6H2.4L5 1.2V9.2L2.4 6.8H0.5Z" fill="none" stroke="#333" stroke-width="0.8"/><g fill="none" stroke="#444" stroke-width="0.8"><path d="M6.6 3.4Q7.8 5.2 6.6 7"/><path d="M8.2 2Q10.2 5.2 8.2 8.4"/><path d="M9.8 0.6Q12.6 5.2 9.8 9.8"/></g></svg>
<div class="abs" style="left:952.6px;top:8.1px;font-size:10.2px;line-height:14px;font-weight:500;color:#101010;white-space:nowrap">中</div>
<div class="abs" style="left:972.2px;top:8.8px;width:11.2px;height:11.6px;background:#fff;border:0.8px solid #8a8a8a"></div>
<div class="abs" style="left:973.8px;top:9.2px;font-size:8px;line-height:11px;color:#111;white-space:nowrap">拼</div>
<div class="abs" style="left:1016.2px;top:2.6px;transform:translateX(-50%);font-size:8.9px;line-height:12px;color:#2a2a2a;white-space:nowrap"><span style="font-size:8.2px">上午</span>10:01</div>
<div class="abs" style="left:1016.8px;top:15.2px;transform:translateX(-50%);font-size:8.9px;letter-spacing:0.22px;line-height:12px;color:#2a2a2a;white-space:nowrap">11/5/2022</div>
<svg class="abs" style="left:1051.4px;top:8.6px" width="11.4" height="11.4" viewBox="0 0 11.4 11.4"><path d="M0.4 0.4H10.4V8.4H4.4L2.4 10.8V8.4H0.4Z" fill="#111"/><path d="M2 2.6H8.8M2 4.4H8.8M2 6.2H6" stroke="#e6e6e6" stroke-width="0.8"/><circle cx="9" cy="8.6" r="2" fill="#111" stroke="#e0e0e0" stroke-width="0.6"/></svg>
<div class="abs" style="left:1076.6px;top:0;width:0.8px;height:28.5px;background:#b8b8b8"></div>
</div>

</body></html>
